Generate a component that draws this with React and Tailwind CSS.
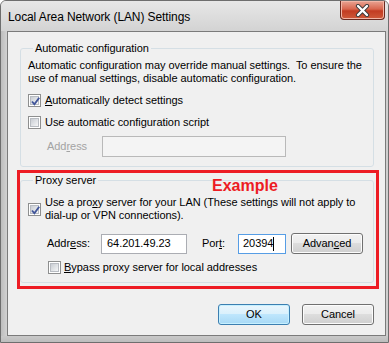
import React from "react";

const Check = ({ checked }) => (
  <span className="relative flex w-[13px] h-[13px] shrink-0 border border-[#8e8f8f] bg-white p-[1px]">
    <span className="flex-1 border border-[#b8bcc2] bg-[linear-gradient(135deg,#c9cdd3,#f5f6f7)]" />
    {checked && (
      <svg className="absolute left-[1px] top-[1px]" width="11" height="11" viewBox="0 0 11 11">
        <path d="M2 5.5 L4.4 8.3 L9.2 1.8" fill="none" stroke="#42569a" strokeWidth="1.9" />
      </svg>
    )}
  </span>
);

const Btn = ({ children, primary }) => (
  <button
    className={
      primary
        ? "w-[72px] h-[21px] rounded-[3px] border border-[#3c7fb1] bg-[linear-gradient(#eaf6fd_0%,#d9f0fc_50%,#bee6fd_50%,#a7d9f5_100%)] shadow-[inset_0_0_0_1px_#c6f0ff] text-[11px] leading-none text-black"
        : "w-[72px] h-[21px] rounded-[3px] border border-[#707070] bg-[linear-gradient(#f2f2f2_0%,#ebebeb_50%,#dddddd_50%,#cfcfcf_100%)] shadow-[inset_0_0_0_1px_#fcfcfc] text-[11px] leading-none text-black"
    }
  >
    {children}
  </button>
);

export default function App() {
  return (
    <div className="w-[389px] h-[343px] flex flex-col overflow-hidden rounded-t-[6px] border border-[#6e6e6e] bg-[#cdcdcd] font-['Liberation_Sans',Arial,sans-serif] text-[11px] tracking-[-0.05px] text-black">
      {/* title bar */}
      <div className="h-[30px] shrink-0 flex items-start justify-between bg-[linear-gradient(#e7e7e7,#d3d3d3)]">
        <span className="ml-[7px] mt-[8px] leading-[16px] text-[12px] tracking-[-0.1px] text-black">Local Area Network (LAN) Settings</span>
        <div className="mr-[3px] w-[45px] h-[19px] flex items-center justify-center rounded-b-[4px] border border-t-0 border-[#6a2a20] bg-[linear-gradient(#e9a493_0%,#d8664e_45%,#c23c22_55%,#cf5a3a_100%)] shadow-[inset_0_0_0_1px_#f2b6a6]">
          <svg width="15" height="13" viewBox="0 0 15 13">
            <path d="M3 2 L12 11 M12 2 L3 11" stroke="#3a3a3a" strokeWidth="4.2" strokeLinecap="round" />
            <path d="M3 2 L12 11 M12 2 L3 11" stroke="#ffffff" strokeWidth="2.4" strokeLinecap="round" />
          </svg>
        </div>
      </div>

      <div className="flex-1 flex">
        <div className="w-[6px] shrink-0 bg-[linear-gradient(90deg,#bdbdbd,#d2d2d2)]" />
        {/* client area */}
        <div className="flex-1 flex flex-col border border-[#7b7b7b] bg-[#f0f0f0] pt-[9px] pl-[12px] pr-[11px]">
          <fieldset className="rounded-[3px] border border-[#d5dfe5] px-[7px] pb-[9px]">
            <legend className="ml-[5px] px-[2px] leading-[14px]">Automatic configuration</legend>
            <p className="mt-[4px] leading-[13px] whitespace-nowrap">
              Automatic configuration may override manual settings.&nbsp; To ensure the
              <br />
              use of manual settings, disable automatic configuration.
            </p>
            <div className="mt-[8px] h-[15px] flex items-center gap-[4px]">
              <Check checked />
              <span><u>A</u>utomatically detect settings</span>
            </div>
            <div className="mt-[7px] h-[15px] flex items-center gap-[4px]">
              <Check />
              <span>Use automatic configuration script</span>
            </div>
            <div className="mt-[6px] flex items-center pl-[19px]">
              <span className="w-[55px] text-[#a3a3a3]">Add<u>r</u>ess</span>
              <div className="w-[184px] h-[21px] border border-[#b9b9b9] bg-[#f4f4f4]" />
            </div>
          </fieldset>

          <div className="relative mt-[3px] -ml-[3px] -mr-[5px] border-[3px] border-[#ed1c24] pr-[2px] pb-[3px]">
            <span className="absolute left-[192px] top-[3px] leading-[20px] text-[16px] tracking-normal font-bold text-[#ed1c24]">Example</span>
            <fieldset className="rounded-[3px] border border-[#d5dfe5] px-[7px] pb-[7px]">
              <legend className="ml-[5px] px-[2px] leading-[14px]">Proxy server</legend>
              <div className="mt-[9px] flex items-center gap-[4px]">
                <Check checked />
                <span className="leading-[13px] whitespace-nowrap">
                  Use a pro<u>x</u>y server for your LAN (These settings will not apply to
                  <br />
                  dial-up or VPN connections).
                </span>
              </div>
              <div className="mt-[11px] h-[21px] flex items-center pl-[19px]">
                <span className="w-[54px]">Addr<u>e</u>ss:</span>
                <div className="w-[86px] h-[20px] flex items-center border border-[#abadb3] bg-white px-[5px]">64.201.49.23</div>
                <span className="ml-[15px] w-[36px]">Por<u>t</u>:</span>
                <div className="w-[48px] h-[20px] flex items-center border border-[#569de5] bg-white px-[4px]">
                  20394<span className="inline-block w-[1px] h-[14px] bg-black" />
                </div>
                <div className="ml-[5px]">
                  <Btn>Advan<u>c</u>ed</Btn>
                </div>
              </div>
              <div className="mt-[6px] h-[15px] flex items-center gap-[3px] pl-[20px]">
                <Check />
                <span><u>B</u>ypass proxy server for local addresses</span>
              </div>
            </fieldset>
          </div>

          <div className="mt-[15px] flex justify-end gap-[12px]">
            <Btn primary>OK</Btn>
            <Btn>Cancel</Btn>
          </div>
        </div>
        <div className="w-[2px] shrink-0 bg-[#cfcfcf]" />
      </div>
      <div className="h-[6px] shrink-0 bg-[linear-gradient(#c9c9c9,#bdbdbd)]" />
    </div>
  );
}
